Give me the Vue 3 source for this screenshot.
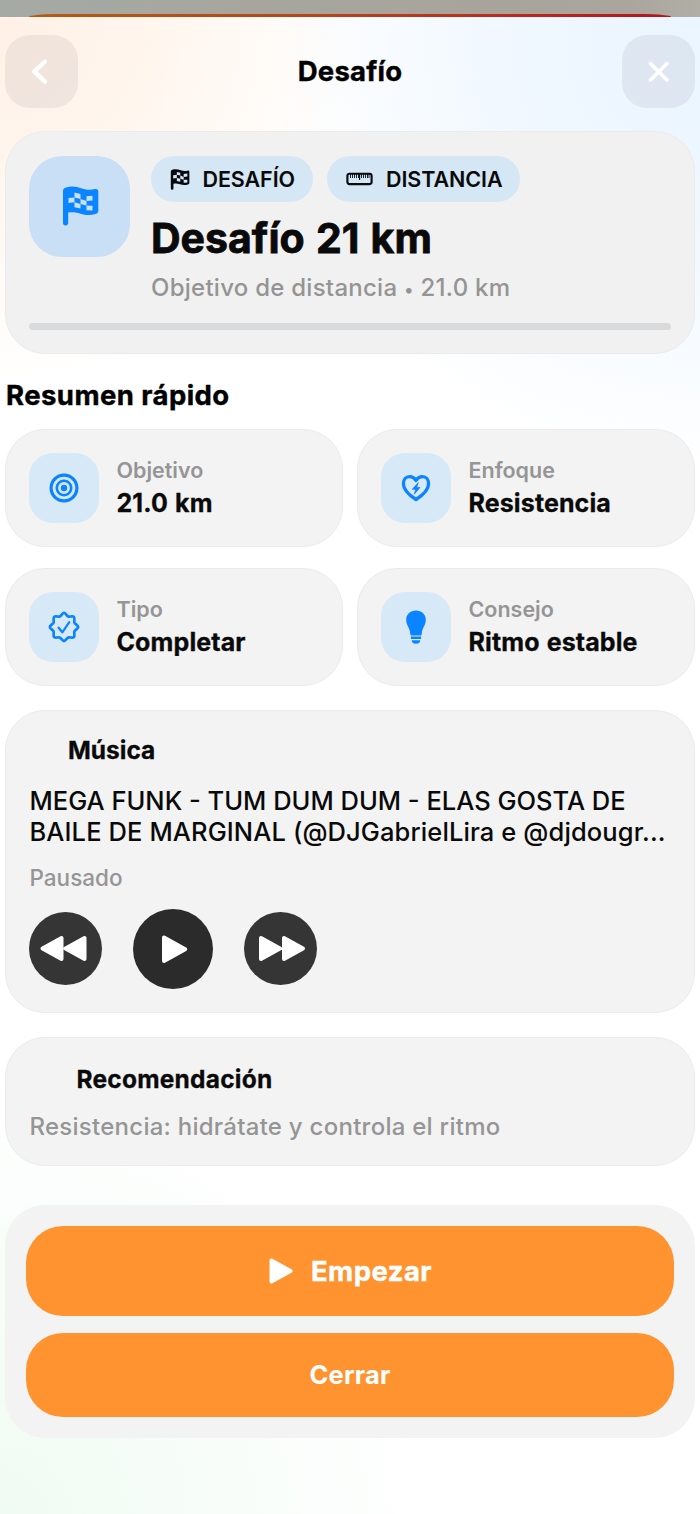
<script setup>
const tiles = [
  { label: 'Objetivo', value: '21.0 km', icon: 'target' },
  { label: 'Enfoque', value: 'Resistencia', icon: 'heart' },
  { label: 'Tipo', value: 'Completar', icon: 'seal' },
  { label: 'Consejo', value: 'Ritmo estable', icon: 'bulb' }
]
</script>

<template>
  <div class="screen">
    <div class="backdrop"><div class="sliver"></div></div>
    <main class="sheet">
      <header class="header">
        <button class="nav-btn" aria-label="Atrás">
          <svg width="73" height="73" viewBox="0 0 73 73"><path d="M40 26.500 29.300 36.600 40 46.700" fill="none" stroke="#fff" stroke-width="4.400" stroke-linecap="round" stroke-linejoin="round" /></svg>
        </button>
        <h1 class="page-title">Desafío</h1>
        <button class="nav-btn" aria-label="Cerrar">
          <svg width="73" height="73" viewBox="0 0 73 73"><path d="M28.500 28.500 45 45M45 28.500 28.500 45" fill="none" stroke="#fff" stroke-width="3.800" stroke-linecap="round" /></svg>
        </button>
      </header>

      <section class="card hero">
        <div class="hero-row">
          <div class="hero-icon">
            <svg width="37" height="40" viewBox="0 0 37 40">
              <path d="M1 5C1 3 2 2 4 1.400C10-.5 15 .8 20 2.500C25 4.200 29 4 33 3.100C35 2.700 36.300 3.600 36.300 5.600V24.500C36.300 26.500 35.500 27.500 33.500 28.100C28 29.700 23.500 29.300 18.500 27.700C14 26.200 10.500 25.800 6.200 26.600V36.800A2.600 2.600 0 0 1 1 36.800Z" fill="#0a84ff" />
              <path d="M12.500 6.500 18.500 8V13L12.500 11.500ZM24.500 10.200 30.500 9.800V14.600L24.500 15ZM6.500 12 12.500 11.500V16.200L6.500 17ZM18.500 13 24.500 15V19.500L18.500 18ZM12.500 16.200 18.500 18V22.600L12.500 21.300ZM24.500 19.500 30.500 19.800V24.500L24.500 24.300Z" fill="#cae0f6" />
            </svg>
          </div>
          <div class="hero-body">
            <div class="chips">
              <span class="chip chip-a">
                <svg width="20" height="21" viewBox="0 0 37 40">
                  <path d="M1 5C1 3 2 2 4 1.400C10-.5 15 .8 20 2.500C25 4.200 29 4 33 3.100C35 2.700 36.300 3.600 36.300 5.600V26C36.300 28 35.500 29 33.500 29.600C28 31.200 23.500 30.800 18.500 29.200C14 27.700 10.500 27.300 6 28.100V37A2.500 2.500 0 0 1 1 37Z" fill="#060a0e" />
                  <path d="M12.500 5.500 19 7V12.500L12.500 11ZM25.500 9.500 32.500 8.800V14.300L25.500 15ZM5.500 12 12.500 11V17L5.500 18ZM19 12.500 25.500 15V20.500L19 18.500ZM12.500 17 19 18.500V24.200L12.500 22.800ZM25.500 20.500 32.500 20.300V25.700L25.500 26Z" fill="#d6e7f6" />
                </svg>
                <span>DESAFÍO</span>
              </span>
              <span class="chip chip-b">
                <svg width="27" height="14" viewBox="0 0 27 14">
                  <rect x="1.400" y="1.700" width="24.200" height="10.400" rx="2" fill="none" stroke="#060a0e" stroke-width="2.100" />
                  <path d="M4.500 2V6M6.500 2V6M8.500 2V6M10.500 2V6M12.500 2V6M15.500 2V6M17.500 2V6M19.500 2V6M21.500 2V6M23 2V6" stroke="#060a0e" stroke-width=".9" />
                  <path d="M13.600 2V8" stroke="#060a0e" stroke-width="1.100" />
                </svg>
                <span>DISTANCIA</span>
              </span>
            </div>
            <h2 class="hero-title">Desafío 21 km</h2>
            <p class="hero-sub">Objetivo de distancia <span class="dot">•</span> 21.0 km</p>
          </div>
        </div>
        <div class="progress"></div>
      </section>

      <h3 class="section-title">Resumen rápido</h3>
      <section class="tiles">
        <article v-for="t in tiles" :key="t.label" class="card tile">
          <div class="tile-icon">
            <svg v-if="t.icon === 'target'" width="34" height="34" viewBox="0 0 34 34">
              <g fill="none" stroke="#0a84ff"><circle cx="17" cy="17" r="12.900" stroke-width="3.200" /><circle cx="17" cy="17" r="7.200" stroke-width="2.600" /></g>
              <circle cx="17" cy="17" r="3.200" fill="#0a84ff" />
            </svg>
            <svg v-else-if="t.icon === 'heart'" width="34" height="34" viewBox="0 0 34 34">
              <path d="M17 28.500C10 24 4.400 18.800 4.400 12.700C4.400 8.600 7 5.700 10.600 5.700C13.400 5.700 15.700 7.200 17 9.400C18.300 7.200 20.600 5.700 23.400 5.700C27 5.700 29.600 8.600 29.600 12.700C29.600 18.800 24 24 17 28.500Z" fill="none" stroke="#0a84ff" stroke-width="3.300" stroke-linejoin="round" />
              <path d="M19.300 11.600 13.300 18.300H16.700L15.300 23.200 21 16.500H17.700Z" fill="#0a84ff" stroke="#0a84ff" stroke-width=".7" stroke-linejoin="round" />
            </svg>
            <svg v-else-if="t.icon === 'seal'" width="34" height="34" viewBox="0 0 34 34">
              <path d="M17 2.800C18.400 2.800 20 6 21.300 6.500C22.600 7 25.800 5.800 26.900 6.900C28 8 26.900 11.300 27.400 12.600C28 13.900 31.200 15.500 31.200 17C31.200 18.500 28 20.100 27.400 21.400C26.900 22.700 28 26 26.900 27.100C25.800 28.200 22.600 27 21.300 27.500C20 28 18.400 31.200 17 31.200C15.600 31.200 14 28 12.700 27.500C11.400 27 8.200 28.200 7.100 27.100C6 26 7.100 22.700 6.600 21.400C6 20.100 2.800 18.500 2.800 17C2.800 15.500 6 13.900 6.600 12.600C7.100 11.300 6 8 7.100 6.900C8.200 5.800 11.400 7 12.700 6.500C14 6 15.600 2.800 17 2.800Z" fill="none" stroke="#0a84ff" stroke-width="2.700" stroke-linejoin="round" />
              <path d="M11.600 17.700 15.300 22.300 22.300 12.200" fill="none" stroke="#0a84ff" stroke-width="2.200" stroke-linecap="round" stroke-linejoin="round" />
            </svg>
            <svg v-else width="34" height="36" viewBox="0 0 34 36">
              <path d="M17 1.500C22.600 1.500 26.800 5.400 26.800 10.700C26.800 16.500 23.200 18.300 22.800 24.400C22.700 25.900 22.200 26.600 21 26.600H13C11.800 26.600 11.300 25.900 11.200 24.400C10.800 18.300 7.200 16.500 7.200 10.700C7.200 5.400 11.400 1.500 17 1.500Z" fill="#0a84ff" />
              <path d="M11.900 27.600H22.100V29.200Q22.100 30.100 21.300 30.100H12.700Q11.900 30.100 11.900 29.200ZM12.700 31.200H21.300C21.100 33.600 19.700 34.800 17 34.800C14.300 34.800 12.900 33.600 12.700 31.200Z" fill="#0a84ff" />
            </svg>
          </div>
          <div class="tile-text">
            <span class="tile-label">{{ t.label }}</span>
            <span class="tile-value">{{ t.value }}</span>
          </div>
        </article>
      </section>

      <section class="card music">
        <h3 class="card-title t-musica">Música</h3>
        <p class="track"><span>MEGA FUNK - TUM DUM DUM - ELAS GOSTA DE</span><span class="line-two">BAILE DE MARGINAL (@DJGabrielLira e @djdougr...</span></p>
        <p class="status">Pausado</p>
        <div class="controls">
          <button class="ctl" aria-label="Anterior">
            <svg width="73" height="73" viewBox="0 0 73 73"><path d="M32.500 26V47L13.500 36.500ZM55.500 26V47L36.500 36.500Z" fill="#fff" stroke="#fff" stroke-width="4" stroke-linejoin="round" /></svg>
          </button>
          <button class="ctl main" aria-label="Reproducir">
            <svg width="80" height="80" viewBox="0 0 80 80"><path d="M31 28.500V52L52.200 40.200Z" fill="#fff" stroke="#fff" stroke-width="4" stroke-linejoin="round" /></svg>
          </button>
          <button class="ctl" aria-label="Siguiente">
            <svg width="73" height="73" viewBox="0 0 73 73"><path d="M17 26V47L36 36.500ZM40 26V47L59 36.500Z" fill="#fff" stroke="#fff" stroke-width="4" stroke-linejoin="round" /></svg>
          </button>
        </div>
      </section>

      <section class="card reco">
        <h3 class="card-title t-reco">Recomendación</h3>
        <p class="reco-text">Resistencia: hidrátate y controla el ritmo</p>
      </section>

      <footer class="actions">
        <button class="cta start">
          <svg width="26" height="28" viewBox="0 0 26 28"><path d="M3.500 3.500V24.500L22.500 14Z" fill="#fff" stroke="#fff" stroke-width="4" stroke-linejoin="round" /></svg>
          <span>Empezar</span>
        </button>
        <button class="cta close">Cerrar</button>
      </footer>
    </main>
  </div>
</template>

<style>
body {
  background: #fff;
}
</style>

<style scoped>
* {
  box-sizing: border-box;
  margin: 0;
}
.screen {
  width: 700px;
  height: 1514px;
  overflow: hidden;
  display: flex;
  flex-direction: column;
  font-family: Inter, "Liberation Sans", sans-serif;
  color: #0a0a0a;
  white-space: nowrap;
}
button {
  border: 0;
  padding: 0;
  font: inherit;
}
svg {
  display: block;
  flex: none;
}
.backdrop {
  height: 17px;
  padding-top: 14px;
  background: linear-gradient(90deg, #a5aaa5 0, #a6a69e 35%, #a8a49b 70%, #aba69d 90%, #b1aea6 100%);
}
.sliver {
  height: 3px;
  margin: 0 29px;
  border-radius: 28px 28px 0 0 / 3px 3px 0 0;
  background: linear-gradient(90deg, #b35a12, #b8441a 45%, #b92b1c 75%, #b5151b);
}
.sheet {
  flex: 1;
  padding: 18px 5px 0;
  background:
    radial-gradient(circle at 0 0, rgba(255, 140, 60, 0.125) 0, rgba(255, 150, 60, 0.085) 160px, rgba(255, 170, 60, 0) 370px),
    radial-gradient(circle at 100% 30px, rgba(10, 140, 255, 0.085) 0, rgba(10, 132, 255, 0.06) 200px, rgba(10, 132, 255, 0) 430px),
    radial-gradient(circle at 0 100%, rgba(52, 199, 89, 0.075) 0, rgba(52, 199, 89, 0.04) 200px, rgba(52, 199, 89, 0) 440px),
    #fff;
}
.header {
  display: flex;
  align-items: center;
  justify-content: space-between;
  height: 73px;
}
.nav-btn {
  width: 73px;
  height: 73px;
  border-radius: 25px;
  background: rgba(60, 60, 67, 0.075);
}
.page-title {
  margin-top: -2px;
  font-size: 27.500px;
  font-weight: 700;
  line-height: 34px;
  letter-spacing: 0.200px;
  color: #000;
  -webkit-text-stroke: 0.400px #000;
}
.card {
  border: 1px solid #ebebed;
  border-radius: 40px;
  background: #f3f3f3;
}
.hero {
  height: 223px;
  margin-top: 23px;
  padding: 24px 23.400px;
  background: #f1f1f1;
}
.hero-row {
  display: flex;
  gap: 21px;
}
.hero-icon {
  width: 100.600px;
  height: 100.600px;
  border-radius: 33px;
  background: #c9dff5;
  display: flex;
  align-items: center;
  justify-content: center;
}
.hero-icon svg {
  margin-left: 1px;
}
.chips {
  display: flex;
  gap: 14px;
}
.chip {
  height: 46px;
  border-radius: 23px;
  background: #d5e6f5;
  display: flex;
  align-items: center;
  font-size: 21.500px;
  font-weight: 600;
  line-height: 26px;
  letter-spacing: -0.080px;
}
.chip-a {
  width: 162px;
  padding-left: 19px;
  gap: 12.500px;
}
.chip-b {
  width: 193px;
  padding-left: 19px;
  gap: 13px;
}
.hero-title {
  margin-top: 10.500px;
  font-size: 41px;
  font-weight: 700;
  line-height: 50px;
  word-spacing: 1.500px;
  -webkit-text-stroke: 0.800px #0a0a0a;
}
.hero-sub {
  margin-top: 10px;
  font-size: 24px;
  font-weight: 500;
  line-height: 30px;
  letter-spacing: 0.260px;
  color: #949494;
}
.dot {
  font-size: 18px;
}
.progress {
  margin-top: 18.500px;
  height: 7px;
  border-radius: 4px;
  background: #d9dadb;
}
.section-title {
  margin: 23.500px 0 17.500px 1px;
  font-size: 27.500px;
  font-weight: 700;
  line-height: 34px;
  letter-spacing: 0.440px;
  color: #000;
  -webkit-text-stroke: 0.400px #000;
}
.tiles {
  display: grid;
  grid-template-columns: 338px 338px;
  column-gap: 14px;
  row-gap: 21px;
}
.tile {
  height: 118px;
  padding: 0 23px;
  display: flex;
  align-items: center;
  gap: 17.500px;
}
.tile-icon {
  width: 70px;
  height: 70px;
  border-radius: 24px;
  background: #d7e8f7;
  display: flex;
  align-items: center;
  justify-content: center;
}
.tile-text {
  display: flex;
  flex-direction: column;
}
.tile-label {
  font-size: 21.500px;
  font-weight: 600;
  line-height: 29px;
  color: #959595;
}
.tile-value {
  font-size: 25px;
  font-weight: 700;
  line-height: 36px;
  letter-spacing: 0.120px;
  word-spacing: 1px;
  -webkit-text-stroke: 0.300px #0a0a0a;
}
.music {
  height: 303px;
  margin-top: 24px;
  padding: 24px 23px 0;
}
.card-title {
  font-size: 24.500px;
  font-weight: 700;
  line-height: 30px;
  -webkit-text-stroke: 0.300px #0a0a0a;
}
.t-musica {
  margin-left: 39px;
}
.t-reco {
  margin-left: 47px;
  letter-spacing: 0.220px;
}
.track {
  margin: 20px 0 0 0.500px;
  display: flex;
  flex-direction: column;
  align-items: flex-start;
  font-size: 25.500px;
  font-weight: 500;
  line-height: 31px;
}
.line-two {
  letter-spacing: 0.110px;
}
.status {
  margin: 17px 0 0 0.500px;
  font-size: 22.500px;
  font-weight: 500;
  line-height: 28px;
  color: #959595;
}
.controls {
  margin-top: 16.500px;
  display: flex;
  align-items: center;
  gap: 31px;
}
.ctl {
  width: 73px;
  height: 73px;
  border-radius: 50%;
  background: #353535;
}
.ctl.main {
  width: 80px;
  height: 80px;
  background: #2b2b2b;
}
.reco {
  height: 129px;
  margin-top: 24px;
  padding: 25.500px 23.500px 0;
}
.reco-text {
  margin-top: 18px;
  font-size: 24px;
  font-weight: 500;
  line-height: 30px;
  letter-spacing: 0.260px;
  color: #959595;
}
.actions {
  height: 233px;
  margin-top: 39px;
  padding: 21px;
  border-radius: 40px;
  background: #f3f3f3;
  display: flex;
  flex-direction: column;
  gap: 17px;
}
.cta {
  border-radius: 37px;
  background: #ff9330;
  color: #fff;
  display: flex;
  align-items: center;
  justify-content: center;
}
.start {
  height: 90px;
  gap: 17px;
  font-size: 27.500px;
  font-weight: 700;
  letter-spacing: 0.450px;
  -webkit-text-stroke: 0.400px #fff;
}
.close {
  height: 84px;
  padding-bottom: 1px;
  font-size: 25.500px;
  font-weight: 650;
  letter-spacing: 0.200px;
}
</style>
